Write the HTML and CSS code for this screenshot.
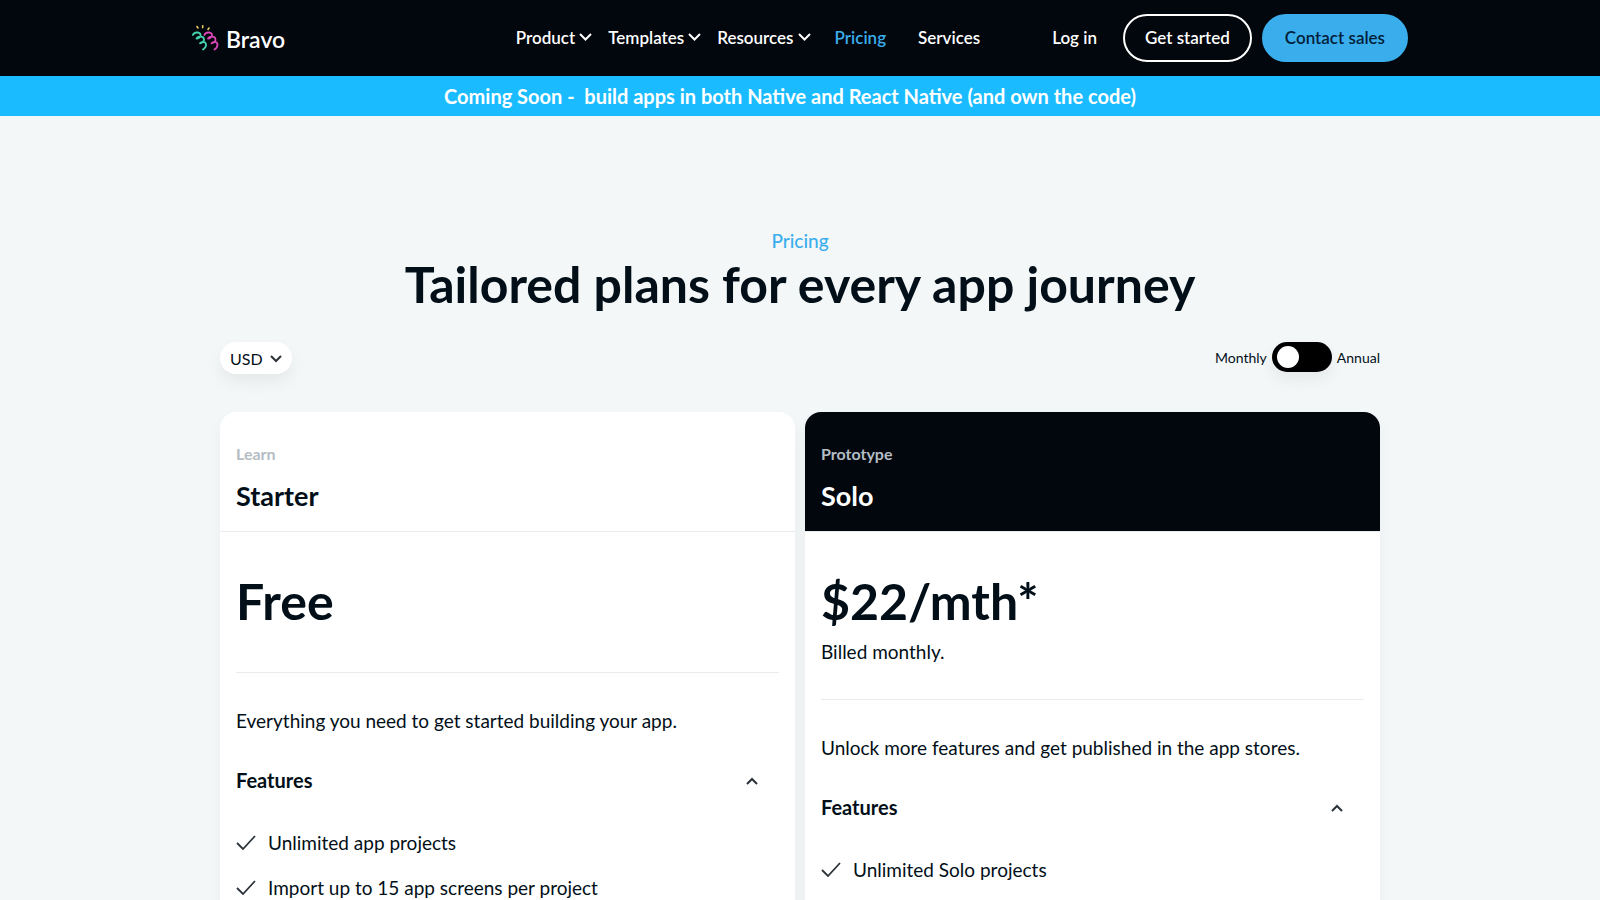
FILE: index.html
```html
<!DOCTYPE html>
<html lang="en">
<head>
    <meta charset="UTF-8">
    <meta name="viewport" content="width=device-width, initial-scale=1.0">
    <title>Bravo - Pricing</title>
    <link rel="stylesheet" href="styles.css">
</head>
<body>
    <!-- top navigation -->
    <header class="header">
        <div class="header-inner">
            <a href="#" class="logo">
                <svg class="logo-mark" width="28" height="28" viewBox="0 0 28 28" fill="none" stroke-width="1.8" stroke-linecap="round" stroke-linejoin="round" aria-hidden="true">
                    <g stroke="#e8c860" stroke-width="1.6">
                        <path d="M5 2.500l1 1.500"/>
                        <path d="M10.800 1.700l-.2 2"/>
                        <path d="M17 4l-1 1.500"/>
                    </g>
                    <path stroke="#45d3b0" d="M.9 11C2 8 7.500 7.500 8.500 10.500c.7 2.500-2.500 4-4 4C6 12 11.500 12 12 15c.5 2.500-2.500 4.200-4 4.300 1.500-2 5.500-2 6 .7.300 2.500-1.500 4.500-3 5.500"/>
                    <path stroke="#d946b8" d="M12.400 11c1.100-3 6.600-3.500 7.600-.5.7 2.500-2.500 4-4 4 1.500-2.500 7-2.500 7.500.5.500 2.500-2.500 4.200-4 4.300 1.500-2 5.500-2 6 .7.300 2.500-1.500 4.500-3 5.500"/>
                </svg>
                <span class="logo-name">Bravo</span>
            </a>
            <nav class="nav">
                <button type="button" class="nav-item">Product
                    <svg class="nav-arrow" width="13" height="8" viewBox="0 0 13 8" aria-hidden="true"><path d="M1 1l5.500 5.500L12 1"/></svg>
                </button>
                <button type="button" class="nav-item">Templates
                    <svg class="nav-arrow" width="13" height="8" viewBox="0 0 13 8" aria-hidden="true"><path d="M1 1l5.500 5.500L12 1"/></svg>
                </button>
                <button type="button" class="nav-item">Resources
                    <svg class="nav-arrow" width="13" height="8" viewBox="0 0 13 8" aria-hidden="true"><path d="M1 1l5.500 5.500L12 1"/></svg>
                </button>
                <a href="#" class="nav-link active">Pricing</a>
                <a href="#" class="nav-link">Services</a>
            </nav>
            <div class="header-actions">
                <a href="#" class="login">Log in</a>
                <a href="#" class="btn btn-outline">Get started</a>
                <a href="#" class="btn btn-blue">Contact sales</a>
            </div>
        </div>
    </header>

    <a href="#" class="banner">Coming Soon -&nbsp; build apps in both Native and React Native (and own the code)</a>

    <main class="pricing">
        <div class="pricing-label">Pricing</div>
        <h1>Tailored plans for every app journey</h1>

        <!-- currency and billing period -->
        <div class="options">
            <div class="currency">
                <select id="currency" aria-label="Currency">
                    <option>USD</option>
                </select>
                <svg class="currency-arrow" width="12" height="8" viewBox="0 0 12 8" aria-hidden="true"><path d="M1 1l5 5 5-5"/></svg>
            </div>
            <label class="billing">
                <span>Monthly</span>
                <input type="checkbox" class="toggle" aria-label="Annual billing">
                <span>Annual</span>
            </label>
        </div>

        <div class="plans">
            <section class="plan">
                <div class="plan-header">
                    <div class="plan-stage">Learn</div>
                    <h2>Starter</h2>
                </div>
                <div class="plan-body">
                    <div class="plan-price">
                        <div class="price">Free</div>
                    </div>
                    <p class="plan-text">Everything you need to get started building your app.</p>
                    <button type="button" class="features-toggle" aria-expanded="true">Features
                        <svg class="features-arrow" width="12" height="8" viewBox="0 0 12 8" aria-hidden="true"><path d="M1 7l5-5 5 5"/></svg>
                    </button>
                    <ul class="features">
                        <li><svg class="check" width="20" height="16" viewBox="0 0 20 16" aria-hidden="true"><path d="M1 8l6 6L19 1"/></svg>Unlimited app projects</li>
                        <li><svg class="check" width="20" height="16" viewBox="0 0 20 16" aria-hidden="true"><path d="M1 8l6 6L19 1"/></svg>Import up to 15 app screens per project</li>
                    </ul>
                </div>
            </section>

            <section class="plan">
                <div class="plan-header dark">
                    <div class="plan-stage">Prototype</div>
                    <h2>Solo</h2>
                </div>
                <div class="plan-body">
                    <div class="plan-price">
                        <div class="price">$22/mth*</div>
                        <div class="price-note">Billed monthly.</div>
                    </div>
                    <p class="plan-text">Unlock more features and get published in the app stores.</p>
                    <button type="button" class="features-toggle" aria-expanded="true">Features
                        <svg class="features-arrow" width="12" height="8" viewBox="0 0 12 8" aria-hidden="true"><path d="M1 7l5-5 5 5"/></svg>
                    </button>
                    <ul class="features">
                        <li><svg class="check" width="20" height="16" viewBox="0 0 20 16" aria-hidden="true"><path d="M1 8l6 6L19 1"/></svg>Unlimited Solo projects</li>
                    </ul>
                </div>
            </section>
        </div>
    </main>
</body>
</html>
```
FILE: styles.css
```css
* {
    box-sizing: border-box;
}

body {
    margin: 0;
    font-family: Lato, "Liberation Sans", sans-serif;
    font-size: 19px;
    line-height: 27px;
    color: #020f18;
    background-color: #f3f7f8;
}

a {
    color: inherit;
    text-decoration: none;
}

button,
select {
    margin: 0;
    padding: 0;
    border: 0;
    background: none;
    font: inherit;
    color: inherit;
    cursor: pointer;
}

svg path {
    fill: none;
}

/* header */
.header {
    background-color: #02060d;
    color: #fff;
}

.header-inner {
    display: flex;
    align-items: center;
    max-width: 1216px;
    height: 76px;
    margin: 0 auto;
    font-size: 17px;
    font-weight: 600;
}

.logo {
    display: flex;
    align-items: center;
    gap: 6px;
    margin-right: auto;
    font-size: 23px;
}

.logo-name {
    padding-top: 3px;
}

.nav {
    display: flex;
    align-items: center;
    gap: 16px;
    padding-bottom: 2px;
}

.nav-item {
    display: flex;
    align-items: center;
    gap: 4px;
}

.nav-arrow path {
    stroke: #fff;
    stroke-width: 2;
}

.nav-link {
    padding: 0 8px;
}

.nav-link.active {
    color: #3aaeec;
}

.header-actions {
    display: flex;
    align-items: center;
    gap: 10px;
    margin-left: 64px;
}

.login {
    margin-right: 16px;
    padding-bottom: 2px;
}

.btn {
    height: 48px;
    padding: 0 20px;
    border: 2px solid #fff;
    border-radius: 24px;
    line-height: 43px;
}

.btn-blue {
    padding: 0 21px;
    border-color: #3aaeec;
    background-color: #3aaeec;
    color: #02203a;
}

.banner {
    display: block;
    padding: 0 20px 0 0;
    background-color: #1abcff;
    color: #fff;
    font-size: 20px;
    font-weight: 700;
    line-height: 40px;
    text-align: center;
}

/* pricing */
.pricing {
    max-width: 1160px;
    margin: 0 auto;
    padding-top: 111px;
}

.pricing-label {
    color: #3aaeec;
    font-weight: 500;
    text-align: center;
}

h1,
h2,
p {
    margin: 0;
}

h1,
.price {
    font-size: 50px;
    line-height: 60px;
    font-weight: 700;
}

h1 {
    text-align: center;
}

.options {
    display: flex;
    align-items: flex-start;
    justify-content: space-between;
    padding: 28px 0 38px;
}

.currency {
    position: relative;
}

.currency select {
    display: block;
    appearance: none;
    width: 72px;
    height: 32px;
    padding-left: 10px;
    border-radius: 16px;
    background-color: #fff;
    box-shadow: 0 8px 16px rgba(2, 15, 24, 0.06);
    font-size: 16px;
}

.currency-arrow {
    position: absolute;
    top: 13px;
    right: 10px;
    pointer-events: none;
}

.currency-arrow path,
.features-arrow path {
    stroke: #2b3238;
    stroke-width: 2;
}

.billing {
    display: flex;
    align-items: center;
    gap: 5px;
    font-size: 14px;
}

.toggle {
    appearance: none;
    width: 60px;
    height: 30px;
    margin: 0;
    padding: 4px 5px;
    border-radius: 15px;
    background-color: #000;
    box-shadow: 0 8px 16px rgba(2, 15, 24, 0.06);
    cursor: pointer;
}

.toggle::before {
    content: "";
    display: block;
    width: 22px;
    height: 22px;
    border-radius: 50%;
    background-color: #fff;
}

.toggle:checked::before {
    margin-left: auto;
}

.plans {
    display: grid;
    grid-template-columns: 1fr 1fr;
    gap: 10px;
}

.plan {
    overflow: hidden;
    border-radius: 16px;
    background-color: #fff;
    box-shadow: 0 8px 16px rgba(2, 15, 24, 0.04);
}

.plan-header {
    padding: 28px 16px 17px;
    border-bottom: 1px solid #e9ecee;
}

.plan-header.dark {
    background-color: #02060d;
    color: #fff;
}

.plan-stage {
    color: #b4bdc4;
    font-size: 16px;
    font-weight: 700;
}

h2 {
    margin-top: 11px;
    font-size: 27px;
    line-height: 36px;
    font-weight: 700;
}

.plan-body {
    padding: 39px 16px;
}

.plan-price {
    padding-bottom: 41px;
    border-bottom: 1px solid #e9ecee;
}

.price-note {
    margin-top: 7px;
    margin-bottom: -7px;
}

.plan-text {
    margin-top: 34px;
}

.features-toggle {
    display: flex;
    align-items: center;
    justify-content: space-between;
    width: 100%;
    margin-top: 33px;
    padding-right: 21px;
    font-size: 20px;
    font-weight: 700;
}

.features {
    display: grid;
    gap: 18px;
    margin: 35px 0 0;
    padding: 0;
    list-style: none;
}

.features li {
    display: flex;
    align-items: center;
    gap: 12px;
}

.check path {
    stroke: #2b3238;
    stroke-width: 1.8;
}
```
